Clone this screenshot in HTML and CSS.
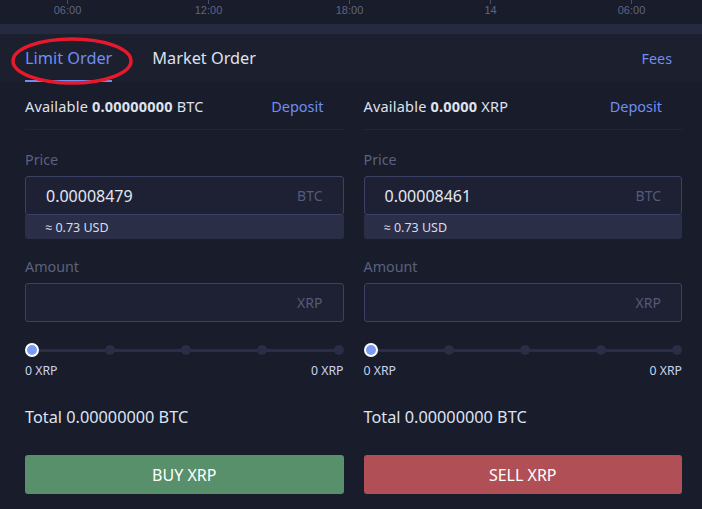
FILE: index.html
```html
<!DOCTYPE html>
<html>
<head>
<meta charset="utf-8">
<link rel="stylesheet" href="styles.css">
</head>
<body>
<div class="page">
  <div class="axis">
    <div class="tick"><span class="mark"></span><span class="tlabel">06:00</span></div>
    <div class="tick"><span class="mark"></span><span class="tlabel">12:00</span></div>
    <div class="tick"><span class="mark"></span><span class="tlabel">18:00</span></div>
    <div class="tick"><span class="mark"></span><span class="tlabel">14</span></div>
    <div class="tick"><span class="mark"></span><span class="tlabel">06:00</span></div>
  </div>
  <div class="band"></div>
  <div class="header">
    <div class="tab active">Limit Order</div>
    <div class="tab">Market Order</div>
    <div class="spacer"></div>
    <div class="fees">Fees</div>
    <svg class="circle" width="126" height="52" viewBox="0 0 126 52"><ellipse cx="63" cy="26" rx="59" ry="22" fill="none" stroke="#e8192b" stroke-width="3.5"/></svg>
  </div>
  <div class="main">
    <div class="col">
      <div class="avail"><span>Available <b>0.00000000</b> BTC</span><span class="link">Deposit</span></div>
      <div class="label">Price</div>
      <div class="field"><span class="val">0.00008479</span><span class="unit">BTC</span></div>
      <div class="sub">≈ 0.73 USD</div>
      <div class="label second">Amount</div>
      <div class="field"><span class="val"></span><span class="unit">XRP</span></div>
      <div class="slider"><span class="knob"></span><span class="dot"></span><span class="dot"></span><span class="dot"></span><span class="dot"></span></div>
      <div class="range"><span>0 XRP</span><span>0 XRP</span></div>
      <div class="total">Total 0.00000000 BTC</div>
      <div class="btn buy">BUY XRP</div>
    </div>
    <div class="col">
      <div class="avail"><span>Available <b>0.0000</b> XRP</span><span class="link">Deposit</span></div>
      <div class="label">Price</div>
      <div class="field"><span class="val">0.00008461</span><span class="unit">BTC</span></div>
      <div class="sub">≈ 0.73 USD</div>
      <div class="label second">Amount</div>
      <div class="field"><span class="val"></span><span class="unit">XRP</span></div>
      <div class="slider"><span class="knob"></span><span class="dot"></span><span class="dot"></span><span class="dot"></span><span class="dot"></span></div>
      <div class="range"><span>0 XRP</span><span>0 XRP</span></div>
      <div class="total">Total 0.00000000 BTC</div>
      <div class="btn sell">SELL XRP</div>
    </div>
  </div>
</div>
</body>
</html>
```
FILE: styles.css
```css
* { box-sizing: border-box; }
html, body { margin: 0; padding: 0; }
body {
  width: 702px;
  height: 509px;
  overflow: hidden;
  background: #191c2a;
  font-family: "Noto Sans", "Open Sans", sans-serif;
  color: #dfe2ee;
}
.page { width: 702px; }
.axis {
  height: 24px;
  display: flex;
  margin-left: -3px;
}
.tick {
  width: 144px;
  display: flex;
  flex-direction: column;
  align-items: center;
}
.mark { width: 1px; height: 4px; background: #4a4f68; }
.tlabel {
  font-family: "Liberation Sans", Arial, sans-serif;
  font-size: 11px;
  line-height: 13px;
  color: #5f6581;
}
.band { height: 10px; background: #262a40; }
.header {
  position: relative;
  height: 48px;
  background: #1c1f2e;
  display: flex;
  align-items: stretch;
  padding: 0 30px 0 25px;
}
.tab {
  display: flex;
  align-items: center;
  font-size: 16.3px;
  color: #dfe2ee;
  margin-right: 40px;
  border-bottom: 2px solid transparent;
  padding-top: 2px;
}
.tab.active { color: #6f8ef0; border-bottom-color: #6f8ef0; }
.spacer { flex: 1; }
.fees { display: flex; align-items: center; font-size: 14.3px; color: #6f8ef0; }
.circle { position: absolute; left: 9px; top: 1px; }
.main {
  display: grid;
  grid-template-columns: 1fr 1fr;
  column-gap: 20px;
  padding: 0 20px 0 25px;
}
.col { display: flex; flex-direction: column; }
.avail {
  height: 48px;
  display: flex;
  align-items: center;
  justify-content: space-between;
  padding: 1px 20px 0 0;
  font-size: 14.5px;
  letter-spacing: 0.2px;
  color: #dfe2ee;
  border-bottom: 1px solid #222638;
}
.avail b { font-weight: 700; }
.link { color: #6f8ef0; letter-spacing: 0; }
.label {
  margin-top: 20px;
  font-size: 14.3px;
  line-height: 20px;
  color: #5b617f;
}
.label.second { margin-top: 18px; }
.field {
  margin-top: 6px;
  height: 39px;
  border: 1px solid #3b4163;
  border-radius: 3px;
  background: #1e2133;
  display: flex;
  align-items: center;
  justify-content: space-between;
  padding: 0 20px 0 20px;
}
.val { font-size: 16px; color: #e3e6f2; }
.unit { font-size: 14px; color: #545a7a; }
.sub {
  height: 24px;
  background: #2a2f47;
  border-radius: 0 0 3px 3px;
  font-size: 12.5px;
  color: #d8dcea;
  display: flex;
  align-items: center;
  padding-left: 20px;
}
.slider {
  margin-top: 21px;
  height: 14px;
  display: flex;
  align-items: center;
  justify-content: space-between;
  background: linear-gradient(#2a2d45, #2a2d45) center / calc(100% - 8px) 3px no-repeat;
}
.knob {
  width: 14px;
  height: 14px;
  border-radius: 50%;
  background: #7b9cf5;
  border: 2px solid #ffffff;
}
.dot {
  width: 10px;
  height: 10px;
  border-radius: 50%;
  background: #2a2d45;
}
.range {
  margin-top: 6px;
  display: flex;
  justify-content: space-between;
  font-size: 12.3px;
  line-height: 16px;
  color: #c9d4f2;
}
.total {
  margin-top: 27px;
  font-size: 16.3px;
  line-height: 22px;
  color: #dde3f5;
}
.btn {
  margin-top: 27px;
  height: 39px;
  border-radius: 3px;
  display: flex;
  align-items: center;
  justify-content: center;
  font-size: 16px;
  color: #ffffff;
}
.buy { background: #57906a; }
.sell { background: #b04f55; }
```
